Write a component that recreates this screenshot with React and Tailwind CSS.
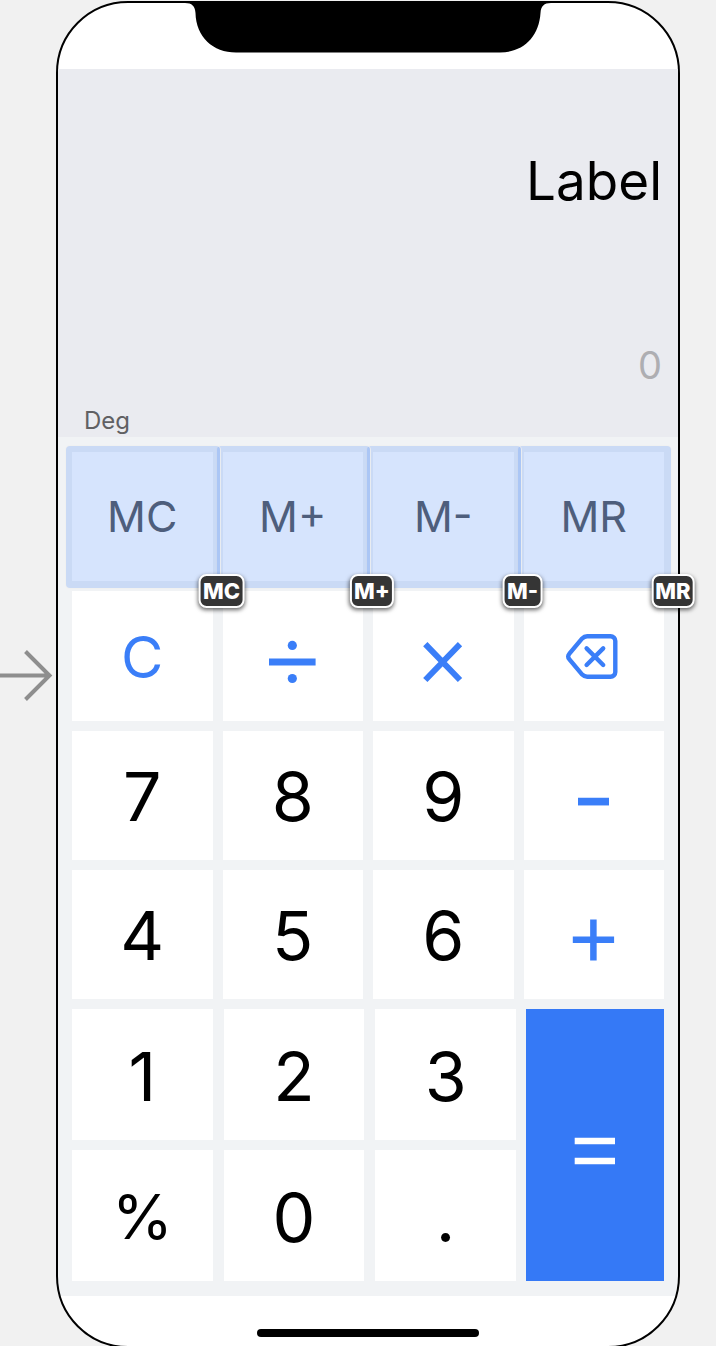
const digitClass = "text-[68px]";

function Icon({ children }) {
  return (
    <svg
      className="h-[60px] w-[60px]"
      viewBox="0 0 60 60"
      fill="none"
      stroke="currentColor"
      aria-hidden="true"
    >
      {children}
    </svg>
  );
}

function Divide() {
  return (
    <Icon>
      <path d="M6 36h46.600" strokeWidth="7.200" />
      <circle cx="29.300" cy="19.400" r="4.600" fill="currentColor" stroke="none" />
      <circle cx="29.300" cy="52.500" r="4.600" fill="currentColor" stroke="none" />
    </Icon>
  );
}

function Times() {
  return (
    <Icon>
      <path d="M12.300 18.200 47 54M47 18.200 12.300 54" strokeWidth="6" />
    </Icon>
  );
}

function Backspace() {
  return (
    <Icon>
      <path
        d="M23.200 10.200H46.500a4.800 4.800 0 0 1 4.800 4.800v31a4.800 4.800 0 0 1-4.800 4.800H23.200a7 7 0 0 1-5-2.200L5.200 33.100a3.800 3.800 0 0 1 0-5.200L18.200 12.400a7 7 0 0 1 5-2.200Z"
        strokeWidth="4.400"
        strokeLinejoin="round"
      />
      <path d="M22.600 22.400 39.200 39M39.200 22.400 22.600 39" strokeWidth="4.400" strokeLinecap="round" />
    </Icon>
  );
}

function Minus() {
  return (
    <Icon>
      <path d="M14 36.600h31" strokeWidth="7.700" />
    </Icon>
  );
}

function Plus() {
  return (
    <Icon>
      <path d="M8.800 35.800h41.300M29.400 15.500v41" strokeWidth="6.500" />
    </Icon>
  );
}

function Equals() {
  return (
    <Icon>
      <path d="M9.700 26h40.300M9.700 46h40.300" strokeWidth="6.700" />
    </Icon>
  );
}

function Key({ children, label, className = "" }) {
  return (
    <button
      type="button"
      aria-label={label}
      className={`flex items-center justify-center bg-white pt-0.5 leading-none ${className}`}
    >
      {children}
    </button>
  );
}

function IconKey({ label, children }) {
  return (
    <button
      type="button"
      aria-label={label}
      className="flex items-center justify-center bg-white text-[#3a7ef8]"
    >
      {children}
    </button>
  );
}

function MemoryKey({ name, layer }) {
  return (
    <button
      type="button"
      className={`relative flex items-center justify-center bg-white text-[43px] leading-none text-[#55585e] ${layer}`}
    >
      {name}
      <span className="pointer-events-none absolute -top-1.5 -right-[7px] -bottom-[7px] -left-1.5 rounded-[4px] bg-[#3478f6]/20 ring-1 ring-[#f0f0f0]/80" />
    </button>
  );
}

function Badge({ name }) {
  return (
    <span className="relative">
      <span className="absolute -right-[9px] -bottom-2.5 flex h-[34px] translate-x-1/2 translate-y-1/2 items-center rounded-[8px] border-2 border-white bg-[#353535] px-0.5 text-[22px] leading-none font-extrabold text-white shadow-[0_2px_4px_rgba(0,0,0,0.6)]">
        {name}
      </span>
    </span>
  );
}

const memory = [
  { name: "MC", layer: "z-40" },
  { name: "M+", layer: "z-30" },
  { name: "M-", layer: "z-20" },
  { name: "MR", layer: "z-10" },
];

export default function App() {
  return (
    <main className="flex h-screen items-start overflow-hidden bg-[#f1f1f1] pt-px pr-9 font-['Inter','Liberation_Sans',sans-serif]">
      <svg
        className="mt-[648px] h-14 w-14 shrink-0"
        viewBox="0 0 56 56"
        fill="none"
        stroke="#8e8e8e"
        strokeWidth="4"
        aria-hidden="true"
      >
        <path d="M0 26.500h50M25.500 2.500l24 24-24 24" />
      </svg>

      <section className="flex min-w-0 flex-1 flex-col rounded-[72px] border-2 border-black bg-[linear-gradient(#fff_66px,#f1f3f5_66px,#f1f3f5_calc(100%-50px),#fff_calc(100%-50px))]">
        <header className="flex h-[66px] justify-center">
          <svg className="h-[50px] w-[366px]" viewBox="0 0 366 50" aria-hidden="true">
            <path d="M0 0h366c-7 0-10 3-10.500 10C354 34 338 49.500 315 49.500H51C28 49.500 11 34 10.500 10 10 3 7 0 0 0Z" />
          </svg>
        </header>

        <div className="flex h-[368px] flex-col bg-[#eaebf0] pt-[78px] pr-4 pl-[26px]">
          <output className="text-right text-[53px] leading-[68px] text-black">Label</output>
          <span className="mt-[126px] text-right text-[38px] leading-[48px] text-[#aeaeb2]">0</span>
          <span className="mt-4 text-[24px] leading-8 text-[#606063]">Deg</span>
        </div>

        <div className="flex flex-col gap-2.5 px-3.5 py-[15px]">
          <div className="relative">
            <div className="grid h-[547px] grid-cols-4 grid-rows-4 gap-2.5">
              {memory.map(({ name, layer }) => (
                <MemoryKey key={name} name={name} layer={layer} />
              ))}
              <Key className="text-[58px] text-[#3a7ef8]">C</Key>
              <IconKey label="Divide"><Divide /></IconKey>
              <IconKey label="Multiply"><Times /></IconKey>
              <IconKey label="Backspace"><Backspace /></IconKey>
              <Key className={digitClass}>7</Key>
              <Key className={digitClass}>8</Key>
              <Key className={digitClass}>9</Key>
              <IconKey label="Minus"><Minus /></IconKey>
              <Key className={digitClass}>4</Key>
              <Key className={digitClass}>5</Key>
              <Key className={digitClass}>6</Key>
              <IconKey label="Plus"><Plus /></IconKey>
            </div>
            <div className="pointer-events-none absolute inset-0 z-50 grid grid-cols-4 grid-rows-4 gap-2.5">
              {memory.map(({ name }) => (
                <Badge key={name} name={name} />
              ))}
            </div>
          </div>

          <div className="flex h-[272px] gap-2.5">
            <div className="grid flex-1 grid-cols-3 grid-rows-2 gap-x-[11px] gap-y-2.5">
              <Key className={digitClass}>1</Key>
              <Key className={digitClass}>2</Key>
              <Key className={digitClass}>3</Key>
              <Key className="text-[62px]">%</Key>
              <Key className={digitClass}>0</Key>
              <Key className={digitClass}>.</Key>
            </div>
            <button
              type="button"
              aria-label="Equals"
              className="flex w-[138px] items-center justify-center bg-[#3579f6] text-white"
            >
              <Equals />
            </button>
          </div>
        </div>

        <footer className="flex h-[50px] justify-center pt-[33px]">
          <span className="h-2 w-[222px] rounded-full bg-black" />
        </footer>
      </section>
    </main>
  );
}
